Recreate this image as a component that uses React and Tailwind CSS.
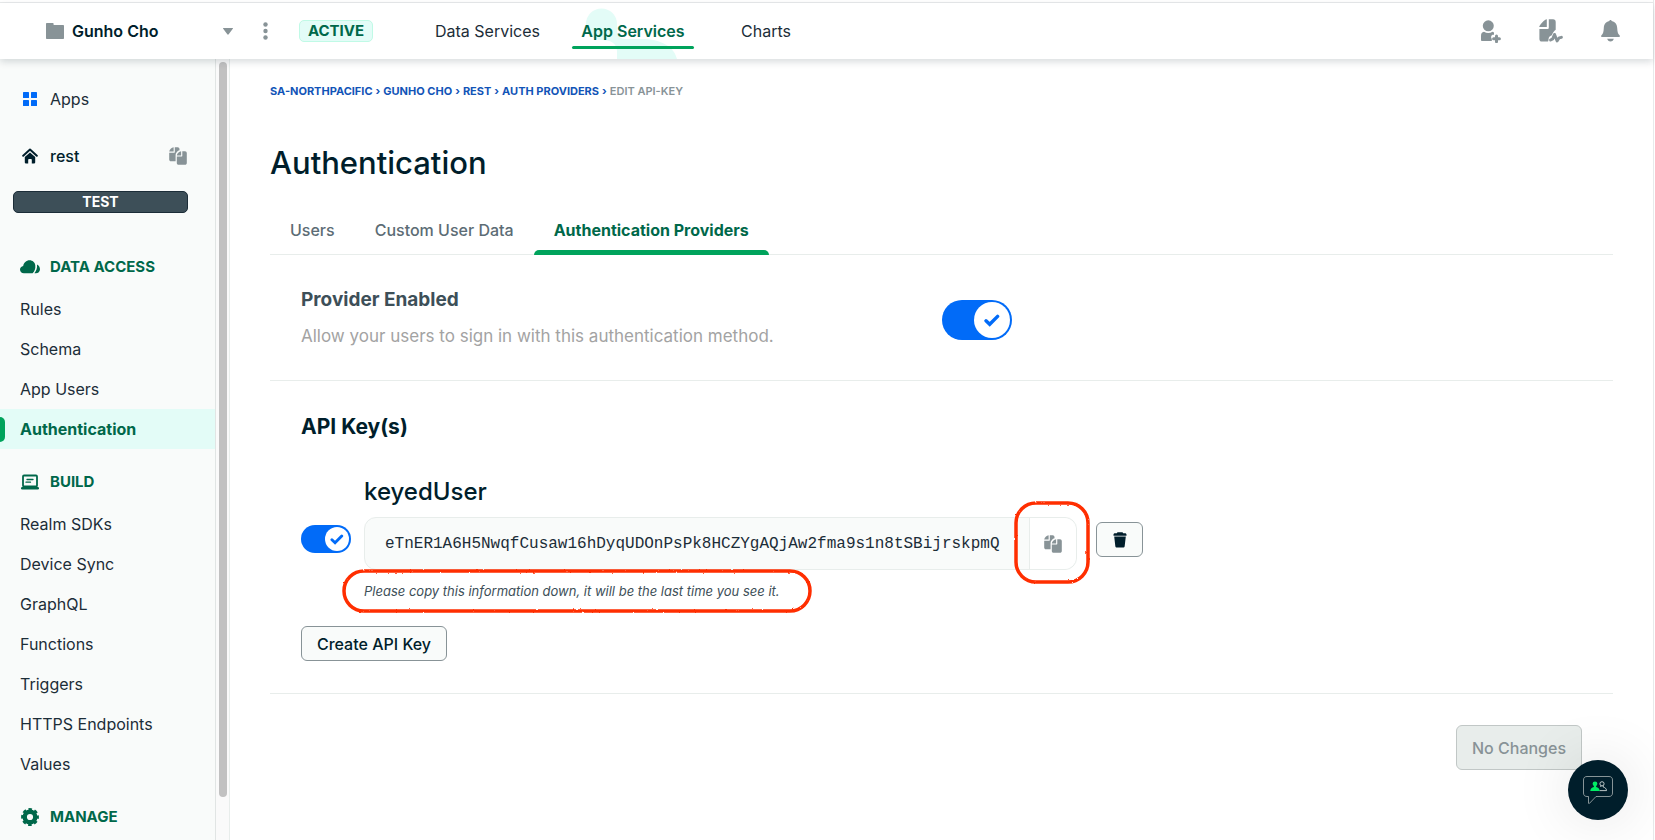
import React from 'react';

function CopyIcon({ className }) {
  return (
    <svg viewBox="0 0 18 18" className={className} fill="currentColor" aria-hidden="true">
      <path d="M4.6 0.3V4.6H0.2C0.5 2.6 2.6 0.5 4.6 0.3Z" />
      <path d="M5.8 0.2H8.6C9.8 0.2 10.5 1 10.5 2.1V3.2C8.6 3.6 6.8 5.7 6.6 7.8V14.3H2C0.9 14.3 0.2 13.6 0.2 12.5V5.8H4.9C5.5 5.8 5.8 5.5 5.8 4.9Z" />
      <path d="M12.1 4.2V8.4H7.8C8 6.4 10.1 4.4 12.1 4.2Z" />
      <path d="M13.3 4.2H16C17.1 4.2 17.8 5 17.8 6.1V16C17.8 17.1 17.1 17.8 16 17.8H9.6C8.5 17.8 7.8 17.1 7.8 16V9.6H12.4C13 9.6 13.3 9.3 13.3 8.7Z" />
    </svg>
  );
}

function FolderIcon() {
  return (
    <svg viewBox="0 0 18 16" className="h-4 w-[18px]" fill="#889397" aria-hidden="true">
      <path d="M1 0H6.6C7.3 0 7.6 0.4 7.6 1V2H17C17.6 2 18 2.4 18 3V15C18 15.6 17.6 16 17 16H1C0.4 16 0 15.6 0 15V1C0 0.4 0.4 0 1 0Z" />
    </svg>
  );
}

function AppsIcon() {
  return (
    <svg viewBox="0 0 14 14" className="mx-[3px] h-[14px] w-[14px]" fill="#016BF8" aria-hidden="true">
      <rect width="6" height="6" rx="0.6" />
      <rect x="8" width="6" height="6" rx="0.6" />
      <rect y="8" width="6" height="6" rx="0.6" />
      <rect x="8" y="8" width="6" height="6" rx="0.6" />
    </svg>
  );
}

function HomeIcon() {
  return (
    <svg viewBox="0 0 16 16" className="mx-[2px] h-4 w-4" aria-hidden="true">
      <path d="M1.2 7.8L8 1.6L14.8 7.8" fill="none" stroke="#001E2B" strokeWidth="2" strokeLinejoin="round" strokeLinecap="round" />
      <path d="M8 4.4L13.2 9.1V14.6C13.2 15.1 12.9 15.4 12.4 15.4H9.8V11.8C9.8 11.3 9.500 11 9 11H7C6.500 11 6.200 11.3 6.200 11.8V15.4H3.6C3.1 15.4 2.8 15.1 2.8 14.6V9.1Z" fill="#001E2B" />
    </svg>
  );
}

function CloudIcon() {
  return (
    <svg viewBox="0 0 20 14" className="h-[14px] w-5" fill="#00684A" aria-hidden="true">
      <path d="M3.800 13.300C1.700 13.300 0 11.700 0 9.600C0 7.700 1.400 6.200 3.200 6C3.700 2.800 6.300 0.300 9.600 0.300C12.600 0.300 15 2.500 15.300 5.400C15.700 8.300 14.600 11.300 12.600 13.300Z" />
      <path d="M17 4.600C18.700 5.300 20 7.200 20 9.200C20 11.500 18.200 13.300 15.900 13.300H14.400C16.400 11 17.400 7.800 17 4.600Z" />
    </svg>
  );
}

function LaptopIcon() {
  return (
    <svg viewBox="0 0 18 16" className="mx-px h-4 w-[18px]" fill="none" stroke="#00684A" aria-hidden="true">
      <rect x="2" y="1.500" width="14" height="11" rx="1" strokeWidth="1.800" />
      <path d="M1.300 14.200H16.700" strokeWidth="2.600" strokeLinecap="round" />
      <path d="M6 5.500H12M5 8.200H9.500" strokeWidth="1.300" strokeLinecap="round" />
    </svg>
  );
}

function GearIcon() {
  return (
    <svg viewBox="0 0 18 18" className="mx-px h-[18px] w-[18px]" aria-hidden="true">
      <circle cx="9" cy="9" r="5.300" fill="none" stroke="#00684A" strokeWidth="4.400" />
      <circle cx="9" cy="9" r="7.400" fill="none" stroke="#00684A" strokeWidth="3" strokeDasharray="3.400 2.412" strokeDashoffset="1.700" />
    </svg>
  );
}

function UserPlusIcon() {
  return (
    <svg viewBox="0 0 20 23" className="h-[23px] w-5" fill="#889397" aria-hidden="true">
      <circle cx="7.300" cy="5.800" r="5.500" />
      <path d="M3 11.800C5.500 13.500 9 13.500 11.500 11.800C12.100 11.900 12.700 12.200 13 12.700V14.800H11.500C10 15.200 9.600 17.600 10.800 18.900V21H0.800C0.300 21 0 20.600 0 20V16C0 13.600 0.900 12 3 11.800Z" />
      <path d="M15.500 15.900V21.700M12.600 18.800H18.400" stroke="#889397" strokeWidth="3" strokeLinecap="round" />
    </svg>
  );
}

function ActivityIcon() {
  return (
    <svg viewBox="0 0 24 24" className="h-6 w-6" fill="#889397" aria-hidden="true">
      <path d="M7.800 0.300V8H0.200C0.400 5.800 5.400 0.700 7.800 0.300Z" />
      <path d="M9.800 0.300H14C15.800 0.300 16.700 1.400 16.700 3V10.800C15 11.800 13.800 14 12.800 16.300C11.500 16.800 10.200 17.500 9.800 18.800C9.400 20.300 9.700 21.600 9 22.600H3C1.300 22.600 0.400 21.600 0.400 20V9.900H8.300C9.300 9.900 9.800 9.400 9.800 8.400Z" />
      <path d="M11.600 21L13.700 19.900L15.500 15.400L18.100 22L20.200 18.800L22.400 18.300" fill="none" stroke="#889397" strokeWidth="2.900" strokeLinejoin="round" strokeLinecap="round" />
    </svg>
  );
}

function BellIcon() {
  return (
    <svg viewBox="0 0 19 22" className="h-[22px] w-[19px]" fill="#889397" aria-hidden="true">
      <path d="M9.500 0C10.200 0 10.500 0.500 10.700 1.100C14.500 1.900 16 4.800 16.200 8C16.400 11.500 16.800 13.800 18.500 15.300C19.300 16 19 17 18 17H1C0 17 -0.300 16 0.500 15.300C2.200 13.800 2.600 11.500 2.800 8C3 4.800 4.500 1.900 8.300 1.100C8.500 0.500 8.800 0 9.500 0Z" />
      <path d="M6.200 18.800H12.800C12.500 20.400 11.200 21.600 9.500 21.600C7.800 21.600 6.500 20.400 6.200 18.800Z" />
    </svg>
  );
}

function TrashIcon() {
  return (
    <svg viewBox="0 0 14 16" className="h-4 w-[14px]" fill="#001E2B" aria-hidden="true">
      <path d="M4.500 0.300H9.500L10.200 1.300H12C12.900 1.300 13.500 1.900 13.500 2.700V3.800H0.500V2.700C0.500 1.900 1.100 1.300 2 1.300H3.800Z" />
      <path d="M1.200 4.600H12.800L11.700 13.900C11.600 14.900 11 15.500 10 15.500H4C3 15.500 2.400 14.900 2.300 13.900Z" />
    </svg>
  );
}

function ChatIcon() {
  return (
    <svg viewBox="0 0 30 28" className="h-7 w-[30px]" fill="none" aria-hidden="true">
      <path d="M4 0.500H26C28.200 0.500 29.500 1.800 29.500 4V17C29.500 19.200 28.200 20.500 26 20.500H13L6.500 27.300C5.800 27.800 5.500 27.500 5.500 27V20.500H4C1.800 20.500 0.500 19.200 0.500 17V4C0.500 1.800 1.800 0.500 4 0.500Z" stroke="#C1C7C6" strokeWidth="0.700" />
      <circle cx="19" cy="7.800" r="2.100" stroke="#E8EDEB" strokeWidth="0.800" />
      <path d="M16.500 14.600H23.500C23.500 12.500 22 11.600 20.200 11V9.800M17.800 9.800V11" stroke="#E8EDEB" strokeWidth="0.800" />
      <circle cx="12" cy="7.800" r="2.400" fill="#00ED64" />
      <path d="M7.300 15C7.300 12.500 9 11.600 10.900 11V9H13.100V11C15 11.600 16.700 12.500 16.700 15Z" fill="#00ED64" />
    </svg>
  );
}

function Toggle({ label, large }) {
  return (
    <label className={large ? 'relative block h-10 w-[70px] shrink-0' : 'relative block h-7 w-[50px] shrink-0'}>
      <input
        type="checkbox"
        role="switch"
        defaultChecked
        aria-label={label}
        className="peer block h-full w-full cursor-pointer appearance-none rounded-full bg-[#889397] checked:bg-[#016BF8]"
      />
      <span
        className={
          large
            ? 'pointer-events-none absolute top-[2px] right-[2px] flex h-9 w-9 items-center justify-center rounded-full bg-white'
            : 'pointer-events-none absolute top-[2px] right-[2px] flex h-6 w-6 items-center justify-center rounded-full bg-white'
        }
      >
        <svg viewBox="0 0 16 13" className={large ? 'h-[13px] w-4' : 'h-[11px] w-[14px]'} fill="none" aria-hidden="true">
          <path d="M2 6.800L5.700 10.300L13.600 2.400" stroke="#016BF8" strokeWidth="3.400" strokeLinejoin="miter" strokeLinecap="round" />
        </svg>
      </span>
    </label>
  );
}

function RoughRing({ id, width, height, radius, className }) {
  return (
    <svg viewBox={`0 0 ${width} ${height}`} className={className} fill="none" aria-hidden="true">
      <filter id={id} x="-5%" y="-10%" width="110%" height="120%">
        <feTurbulence type="fractalNoise" baseFrequency="0.3" numOctaves="2" seed="4" />
        <feDisplacementMap in="SourceGraphic" scale="2" />
      </filter>
      <rect x="2" y="2" width={width - 4} height={height - 4} rx={radius} stroke="#FF2D05" strokeWidth="3.500" filter={`url(#${id})`} />
    </svg>
  );
}

function Header() {
  return (
    <header className="relative z-10 flex h-14 items-center bg-white pr-[33px] pl-[46px] shadow-[0_3px_7px_rgba(0,30,43,0.15)]">
      <button type="button" className="flex w-[187px] items-center gap-2 text-left font-semibold text-[#001E2B]">
        <FolderIcon />
        <span className="flex-1">Gunho Cho</span>
        <svg viewBox="0 0 10 7" className="h-[7px] w-[10px]" fill="#889397" aria-hidden="true">
          <path d="M0.500 0H9.500C10 0 10.100 0.400 9.800 0.800L5.700 6.300C5.300 6.800 4.700 6.800 4.300 6.300L0.200 0.800C-0.100 0.400 0 0 0.500 0Z" />
        </svg>
      </button>
      <button type="button" aria-label="Project options" className="ml-[30px]">
        <svg viewBox="0 0 5 18" className="h-[18px] w-[5px]" fill="#889397" aria-hidden="true">
          <circle cx="2.500" cy="2.500" r="2.200" />
          <circle cx="2.500" cy="9" r="2.200" />
          <circle cx="2.500" cy="15.500" r="2.200" />
        </svg>
      </button>
      <span className="ml-[31px] flex h-[22px] w-[74px] items-center justify-center rounded-[5px] border border-[#C0FAE6] bg-[#E3FCF7] text-[15px] font-bold text-[#00684A]">
        ACTIVE
      </span>
      <nav className="ml-[52px] flex h-full flex-1 items-center text-[#1C2D38]">
        <a href="#data" className="w-[147px] pl-[10px]">Data Services</a>
        <a href="#app" className="relative flex h-full w-[122px] items-center justify-center font-semibold text-[#00684A]">
          <svg viewBox="0 0 122 56" className="absolute inset-0 h-full w-full" fill="#E3FCF7" aria-hidden="true">
            <path d="M14 21A15.500 15.500 0 0 1 45 21V27C45 33 48 36 54 36H70C88 36 102 43 105 56H45V48C45 40 38 37 29.500 37A15.500 15.500 0 0 1 14 21Z" />
          </svg>
          <span className="relative">App Services</span>
          <span className="absolute bottom-[10px] left-0 h-[3px] w-full rounded-full bg-[#00A35C]" />
        </a>
        <a href="#charts" className="ml-[47px]">Charts</a>
      </nav>
      <div className="flex items-center gap-[38px]">
        <button type="button" aria-label="Invite user"><UserPlusIcon /></button>
        <button type="button" aria-label="Activity feed"><ActivityIcon /></button>
        <button type="button" aria-label="Notifications"><BellIcon /></button>
      </div>
    </header>
  );
}

function NavSection({ icon, title, items = [] }) {
  return (
    <section>
      <h2 className="flex items-center gap-[10px] px-5 pt-[22px] pb-[11px] text-[15px] leading-[22px] font-bold text-[#00684A]">
        {icon}
        <span>{title}</span>
      </h2>
      <ul>
        {items.map((item) => {
          const active = item === 'Authentication';
          return (
            <li key={item}>
              <a
                href={`#${item}`}
                aria-current={active ? 'page' : undefined}
                className={
                  active
                    ? 'relative flex h-10 items-center bg-[#E3FCF7] px-5 font-bold text-[#00684A]'
                    : 'flex h-10 items-center px-5 text-[#1C2D38]'
                }
              >
                {active && <span className="absolute top-2 left-0 h-[25px] w-[5px] rounded-r-md bg-[#00A35C]" />}
                {item}
              </a>
            </li>
          );
        })}
      </ul>
    </section>
  );
}

function Sidebar() {
  return (
    <aside className="flex w-[230px] shrink-0 border-r border-[#E8EDEB] bg-[#F9FBFA]">
      <div className="w-[216px] border-r border-[#E1E5E4] pt-5">
        <a href="#apps" className="flex h-10 items-center gap-[10px] px-5 text-[#1C2D38]">
          <AppsIcon />
          Apps
        </a>
        <div className="mt-[17px] flex h-10 items-center gap-[10px] pr-7 pl-5 font-medium text-[#001E2B]">
          <HomeIcon />
          <a href="#rest" className="flex-1">rest</a>
          <button type="button" aria-label="Copy app ID" className="text-[#889397]">
            <CopyIcon className="h-[18px] w-[18px]" />
          </button>
        </div>
        <div className="mt-[15px] mr-[27px] mb-[21px] ml-[13px] flex h-[22px] items-center justify-center rounded-[5px] border border-[#1C2D38] bg-[#3D4F58] text-sm font-bold text-white">
          TEST
        </div>
        <NavSection icon={<CloudIcon />} title="DATA ACCESS" items={['Rules', 'Schema', 'App Users', 'Authentication']} />
        <NavSection
          icon={<LaptopIcon />}
          title="BUILD"
          items={['Realm SDKs', 'Device Sync', 'GraphQL', 'Functions', 'Triggers', 'HTTPS Endpoints', 'Values']}
        />
        <NavSection icon={<GearIcon />} title="MANAGE" />
      </div>
      <div className="flex flex-1 justify-center bg-[#FAFAFA] pt-[3px] pb-[43px]">
        <div className="w-2 rounded-full bg-[#C1C1C1]" />
      </div>
    </aside>
  );
}

function Breadcrumbs() {
  return (
    <nav aria-label="Breadcrumb" className="flex gap-[3px] pt-6 text-[11px] leading-4 font-bold text-[#1254B7]">
      {['SA-NORTHPACIFIC', 'GUNHO CHO', 'REST', 'AUTH PROVIDERS'].map((crumb) => (
        <React.Fragment key={crumb}>
          <a href={`#${crumb}`}>{crumb}</a>
          <span>›</span>
        </React.Fragment>
      ))}
      <span className="font-semibold text-[#889397]">EDIT API-KEY</span>
    </nav>
  );
}

function ApiKeys() {
  return (
    <section className="border-b border-[#E8EDEB] pt-8 pb-8 pl-[31px]">
      <h2 className="text-[21px] leading-7 font-bold text-[#001E2B]">API Key(s)</h2>
      <h3 className="mt-[35px] ml-[63px] text-2xl leading-8 font-medium text-[#001E2B]">keyedUser</h3>
      <div className="mt-[9px] flex items-start">
        <div className="mt-2 mr-[13px]">
          <Toggle label="Enable keyedUser" />
        </div>
        <div className="flex h-[53px] rounded-xl border border-[#E8EDEB] bg-[#F9FBFA]">
          <code className="flex w-[664px] items-center pl-5 font-['Liberation_Mono',monospace] text-base text-[#1C2D38]">
            eTnER1A6H5NwqfCusaw16hDyqUDOnPsPk8HCZYgAQjAw2fma9s1n8tSBijrskpmQ
          </code>
          <div className="relative flex w-[47px] items-center justify-center rounded-r-xl border-l border-[#E8EDEB] bg-white">
            <button type="button" aria-label="Copy API key" className="text-[#889397]">
              <CopyIcon className="h-[18px] w-[18px]" />
            </button>
            <RoughRing id="ring-copy" width={76} height={83} radius={20} className="pointer-events-none absolute -top-[17px] -left-4 h-[83px] w-[76px]" />
          </div>
        </div>
        <button
          type="button"
          aria-label="Delete API key"
          className="mt-[5px] ml-[19px] flex h-[35px] w-[47px] items-center justify-center rounded-md border border-[#889397] bg-[#F9FBFA]"
        >
          <TrashIcon />
        </button>
      </div>
      <p className="relative mt-[10px] ml-[63px] w-fit text-[13px] leading-[22px] text-[#3D4F58] italic">
        Please copy this information down, it will be the last time you see it.
        <RoughRing id="ring-note" width={470} height={44} radius={20} className="pointer-events-none absolute -top-[11px] -left-[22px] h-11 w-[470px] max-w-none" />
      </p>
      <button
        type="button"
        className="mt-6 flex h-[35px] w-[146px] items-center justify-center rounded-md border border-[#889397] bg-[#F9FBFA] font-medium text-[#001E2B]"
      >
        Create API Key
      </button>
    </section>
  );
}

function Main() {
  const tab = 'flex h-12 items-center px-5 font-medium text-[#5C6C75]';
  return (
    <main className="min-w-0 flex-1 bg-white px-10">
      <Breadcrumbs />
      <h1 className="mt-11 text-[31px] leading-10 font-medium text-[#001E2B]">Authentication</h1>
      <div role="tablist" className="mt-[23px] flex border-b border-[#E8EDEB]">
        <button type="button" role="tab" className={tab}>Users</button>
        <button type="button" role="tab" className={tab}>Custom User Data</button>
        <button type="button" role="tab" aria-selected="true" className="relative flex h-12 items-center px-5 font-bold text-[#00684A]">
          Authentication Providers
          <span className="absolute -bottom-px left-0 h-[5px] w-full rounded-t-md bg-[#00A35C]" />
        </button>
      </div>
      <section className="flex items-start border-b border-[#E8EDEB] pt-[31px] pb-[30px] pl-[31px]">
        <div className="w-[641px]">
          <h2 className="text-[19px] leading-7 font-bold text-[#3D4F58]">Provider Enabled</h2>
          <p className="mt-2 text-[17px] leading-7 text-[#A3A3A3]">Allow your users to sign in with this authentication method.</p>
        </div>
        <div className="mt-[14px]">
          <Toggle large label="Provider Enabled" />
        </div>
      </section>
      <ApiKeys />
      <div className="flex justify-end pt-[31px] pr-[31px] pb-8">
        <button
          type="button"
          disabled
          className="h-[45px] w-[126px] rounded-md border border-[#C1C7C6] bg-[#E8EDEB] font-medium text-[#889397]"
        >
          No Changes
        </button>
      </div>
    </main>
  );
}

export default function App() {
  return (
    <div className="mr-px flex min-h-screen flex-col border-r border-[#E8EAEB] bg-white pt-[2px] font-['Inter',sans-serif] text-base">
      <div className="flex flex-1 flex-col border-t border-[#E8EAEB]">
        <Header />
        <div className="flex flex-1">
          <Sidebar />
          <Main />
        </div>
      </div>
      <button
        type="button"
        aria-label="Open support chat"
        className="fixed right-[27px] bottom-5 z-20 flex h-[60px] w-[60px] items-center justify-center rounded-full bg-[#001E2B] shadow-[0_0_60px_rgba(0,0,0,0.12)]"
      >
        <ChatIcon />
      </button>
    </div>
  );
}
